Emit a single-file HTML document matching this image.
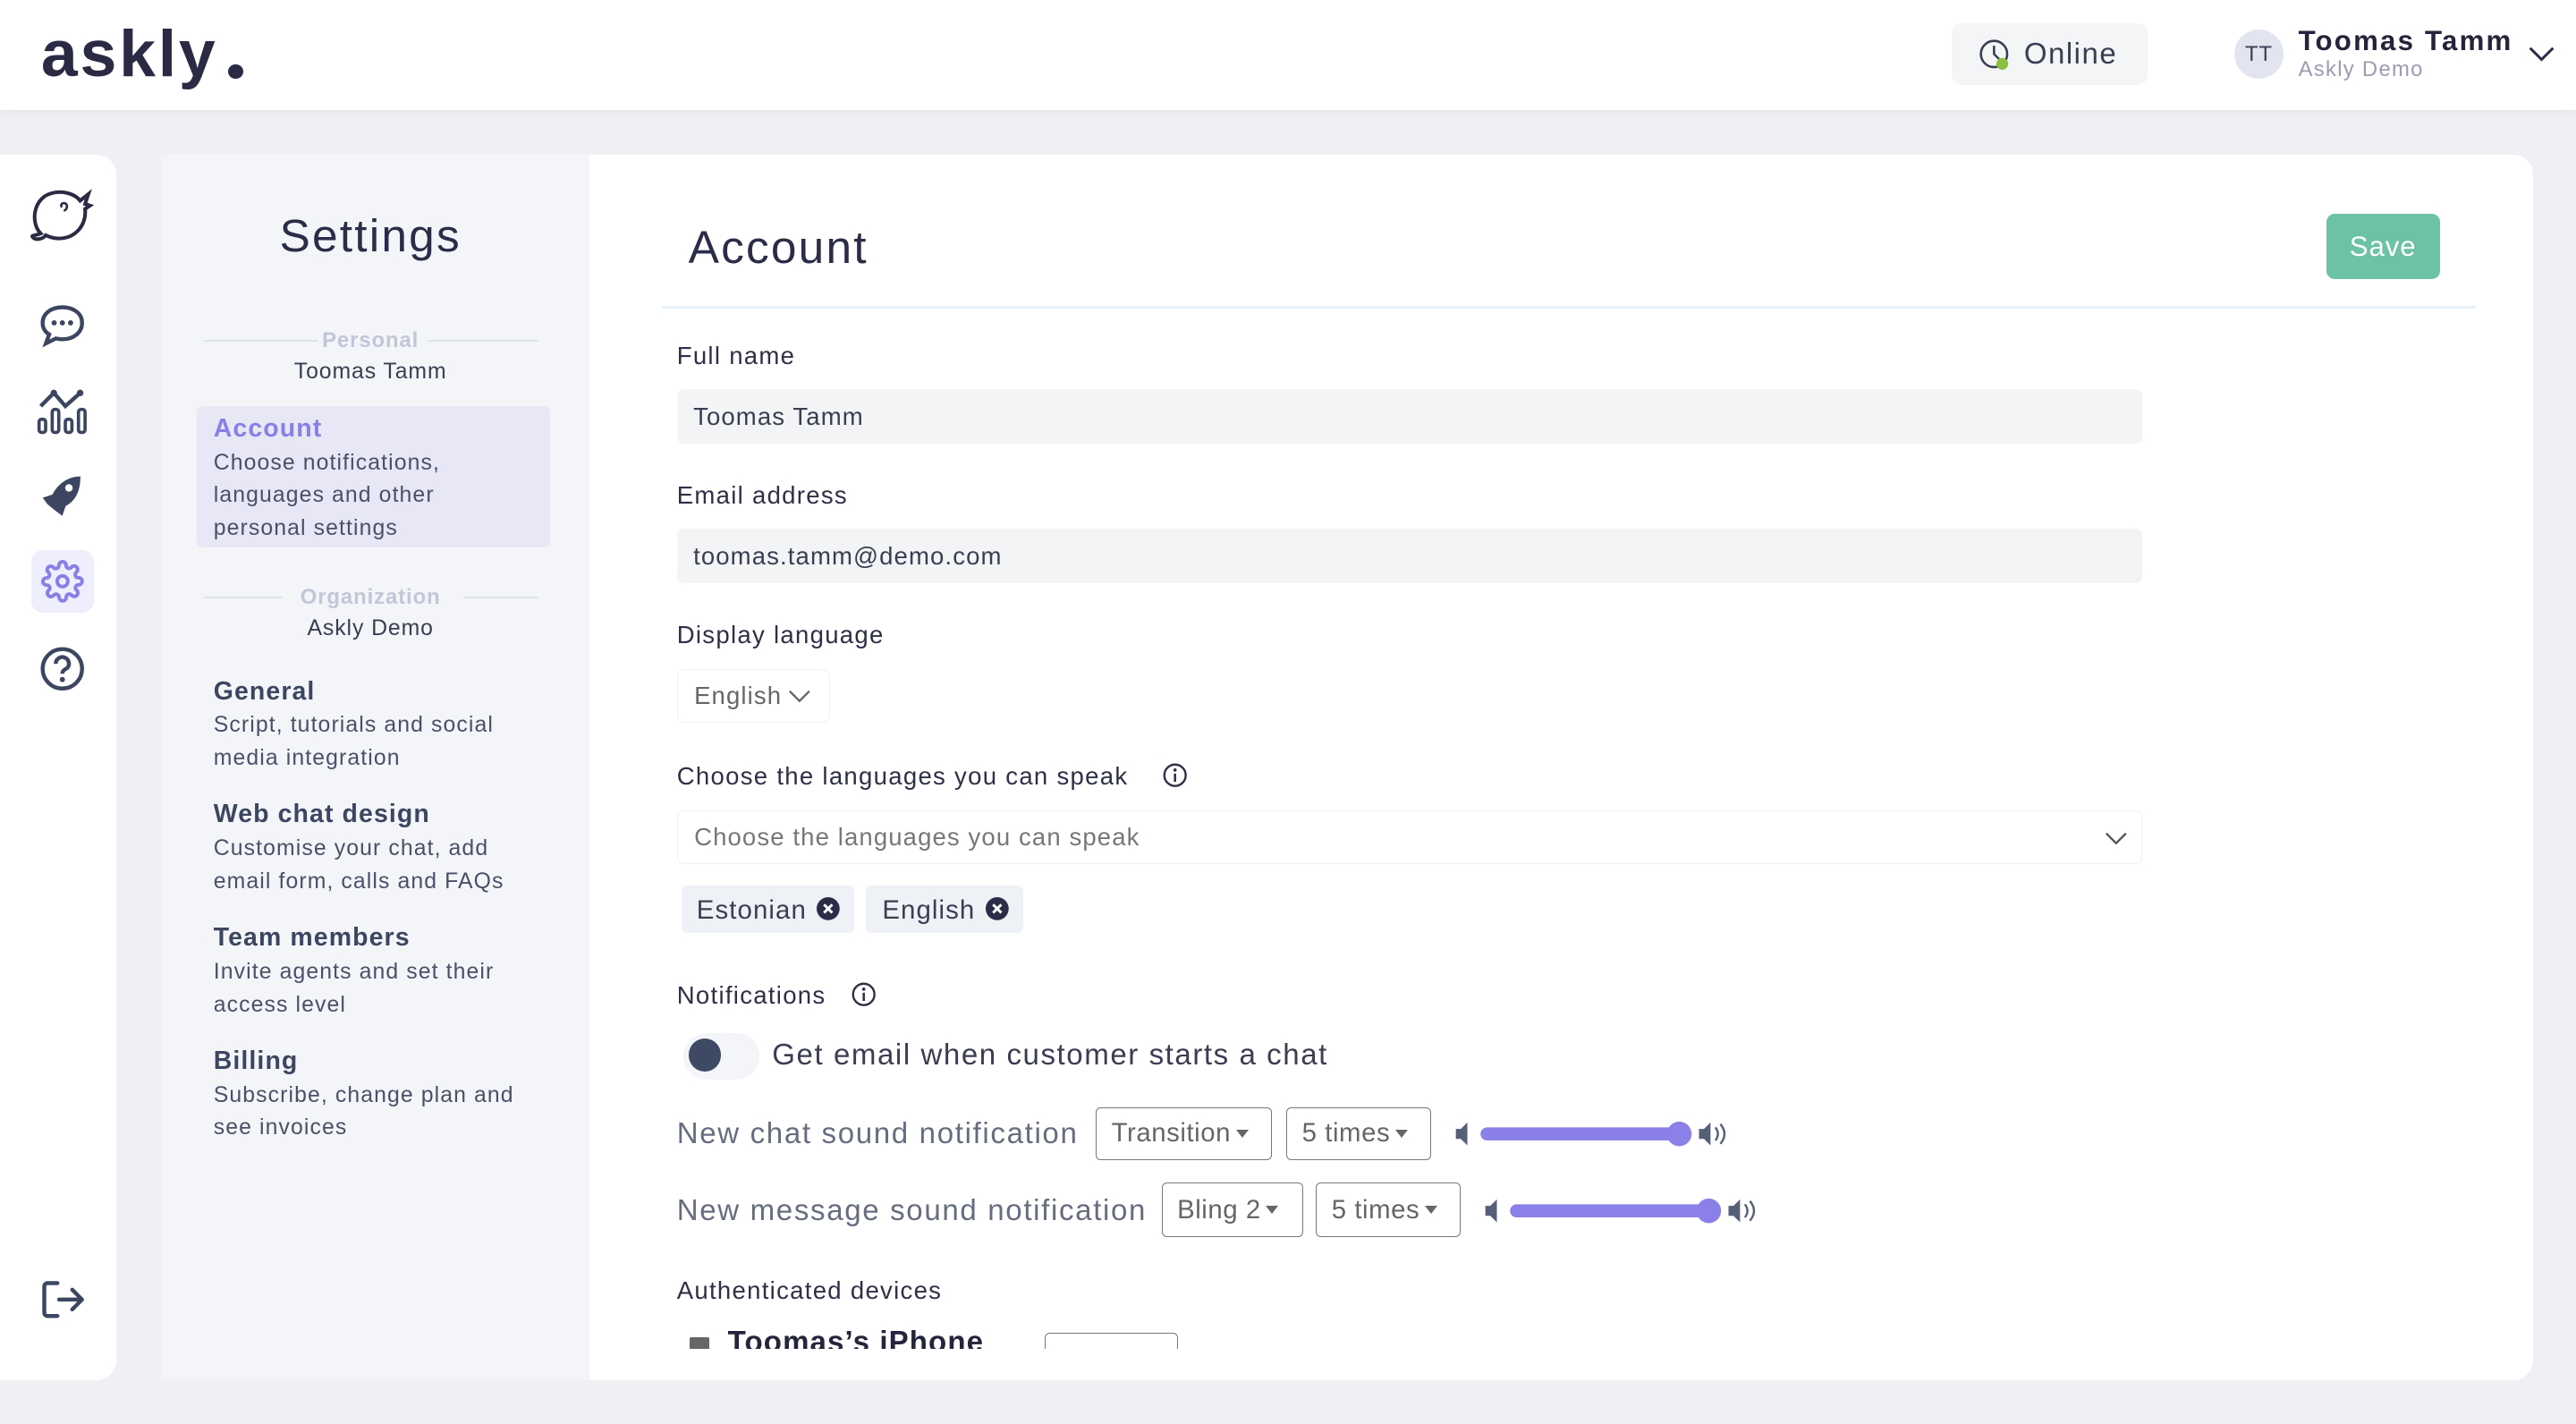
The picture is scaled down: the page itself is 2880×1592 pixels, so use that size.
<!DOCTYPE html>
<html><head><meta charset="utf-8"><style>
html,body{margin:0;padding:0;overflow:hidden;width:2880px;height:1592px;background:#eef0f3}
#w{zoom:1.83673;width:1568px;height:867px;position:relative;font-family:"Liberation Sans",sans-serif;color:#2b2d48;letter-spacing:0.5px}
.a{position:absolute;white-space:nowrap}
.lbl{font-size:15px;color:#2e3047;letter-spacing:0.7px}
.inp{position:absolute;background:#f3f4f6;border-radius:4px;font-size:15px;color:#3b3d52;box-sizing:border-box;padding-left:10px;display:flex;align-items:center;letter-spacing:0.6px}
.nh{font-size:15.5px;font-weight:bold;color:#3d4660;letter-spacing:0.6px}
.nd{font-size:13.5px;color:#4a5068;line-height:20px;letter-spacing:0.6px}
.sel{position:absolute;border:1px solid #777;border-radius:3px;box-sizing:border-box;font-size:16px;color:#666;display:flex;align-items:center;padding-left:9px;letter-spacing:0.3px}
.tri{display:inline-block;border-left:4px solid transparent;border-right:4px solid transparent;border-top:5px solid #666;margin-left:3px}
.row{font-size:18px;color:#666d80;letter-spacing:0.9px}
</style></head><body><div id="w">
<!-- header -->
<div class="a" style="left:0;top:0;width:1568px;height:67px;background:#fff;box-shadow:0 2px 6px rgba(0,0,0,.05)"></div>
<div class="a" style="left:25px;top:9px;font-size:40px;font-weight:bold;color:#2b2a45;letter-spacing:1.5px">askly</div>
<div class="a" style="left:139px;top:39px;width:9px;height:9px;border-radius:50%;background:#2b2a45"></div>
<div class="a" style="left:1188px;top:14px;width:119px;height:38px;background:#f3f5f7;border-radius:6px"></div>
<svg class="a" style="left:1204px;top:23px" width="22" height="22" viewBox="0 0 22 22"><circle cx="10" cy="10" r="8" fill="none" stroke="#3b3d52" stroke-width="1.4"/><path d="M10 5v5l3 3" fill="none" stroke="#3b3d52" stroke-width="1.4"/><circle cx="15" cy="16" r="3.6" fill="#8cbf3f"/></svg>
<div class="a" style="left:1232px;top:23px;font-size:18px;color:#3b3d52;letter-spacing:0.8px">Online</div>
<div class="a" style="left:1360px;top:18px;width:30px;height:30px;border-radius:50%;background:#e2e5ef;font-size:13px;color:#3b3d52;text-align:center;line-height:30px">TT</div>
<div class="a" style="left:1399px;top:15px;font-size:17px;font-weight:bold;color:#24253d;letter-spacing:1.2px">Toomas Tamm</div>
<div class="a" style="left:1399px;top:35px;font-size:13px;color:#9a9cb3;letter-spacing:0.7px">Askly Demo</div>
<svg class="a" style="left:1538px;top:27px" width="18" height="12"><path d="M2 2l7 7 7-7" fill="none" stroke="#2b2d48" stroke-width="1.6"/></svg>
<!-- rail -->
<div class="a" style="left:0;top:94px;width:71px;height:746px;background:#fff;border-radius:0 12px 12px 0"></div>
<svg class="a" style="left:16px;top:112px" width="44" height="40" viewBox="0 0 44 40"><path d="M9 30C3 24 4 10 14 6c8-3 16 0 19 4l5-4-2 6 3 1-3 2c1 10-6 18-16 18-3 0-6-1-8-2-2 3-7 3-8 1-1-1 3-1 5-2z" fill="none" stroke="#2b2a45" stroke-width="2.2"/><path d="M22 14c-2-2 2-4 3-1 0 2-1 3-2 3" fill="none" stroke="#2b2a45" stroke-width="1.4"/></svg>
<svg class="a" style="left:24px;top:184px" width="28" height="28" viewBox="0 0 28 28"><path d="M14 3C7 3 2 7 2 12.5c0 3 1.5 5.5 4 7L4 25l6-3c1.3.3 2.6.5 4 .5 7 0 12-4.3 12-10S21 3 14 3z" fill="none" stroke="#3d4660" stroke-width="2.4"/><circle cx="9" cy="12.5" r="1.6" fill="#3d4660"/><circle cx="14" cy="12.5" r="1.6" fill="#3d4660"/><circle cx="19" cy="12.5" r="1.6" fill="#3d4660"/></svg>
<svg class="a" style="left:22px;top:235px" width="34" height="30" viewBox="0 0 34 30"><path d="M3 12l8-8 7 8 9-8" fill="none" stroke="#3d4660" stroke-width="2.4"/><circle cx="11" cy="4" r="2" fill="#3d4660"/><circle cx="27" cy="4" r="2" fill="#3d4660"/><rect x="2" y="20" width="4" height="8" rx="1.5" fill="none" stroke="#3d4660" stroke-width="2"/><rect x="10" y="14" width="4" height="14" rx="1.5" fill="none" stroke="#3d4660" stroke-width="2"/><rect x="18" y="20" width="4" height="8" rx="1.5" fill="none" stroke="#3d4660" stroke-width="2"/><rect x="26" y="14" width="4" height="14" rx="1.5" fill="none" stroke="#3d4660" stroke-width="2"/></svg>
<svg class="a" style="left:24px;top:288px" width="28" height="28" viewBox="0 0 28 28"><path d="M25 2C17 2 11 7 8 13l-6 2 3 4 5 4 4 3 2-6c6-3 9-9 9-18z" fill="#3d4660"/><circle cx="18" cy="9" r="2.3" fill="#fff"/></svg>
<div class="a" style="left:19px;top:335px;width:38px;height:38px;background:#efeefc;border-radius:7px"></div>
<svg class="a" style="left:25px;top:341px" width="26" height="26" viewBox="0 0 24 24"><path d="M12 15a3 3 0 100-6 3 3 0 000 6z" fill="none" stroke="#8a7fe6" stroke-width="2"/><path d="M19.4 15a1.7 1.7 0 00.3 1.8l.1.1a2 2 0 11-2.8 2.8l-.1-.1a1.7 1.7 0 00-1.8-.3 1.7 1.7 0 00-1 1.5V21a2 2 0 11-4 0v-.1a1.7 1.7 0 00-1.1-1.5 1.7 1.7 0 00-1.8.3l-.1.1a2 2 0 11-2.8-2.8l.1-.1a1.7 1.7 0 00.3-1.8 1.7 1.7 0 00-1.5-1H3a2 2 0 110-4h.1a1.7 1.7 0 001.5-1.1 1.7 1.7 0 00-.3-1.8l-.1-.1a2 2 0 112.8-2.8l.1.1a1.7 1.7 0 001.8.3H9a1.7 1.7 0 001-1.5V3a2 2 0 114 0v.1a1.7 1.7 0 001 1.5 1.7 1.7 0 001.8-.3l.1-.1a2 2 0 112.8 2.8l-.1.1a1.7 1.7 0 00-.3 1.8V9a1.7 1.7 0 001.5 1H21a2 2 0 110 4h-.1a1.7 1.7 0 00-1.5 1z" fill="none" stroke="#8a7fe6" stroke-width="2"/></svg>
<svg class="a" style="left:24px;top:393px" width="28" height="28" viewBox="0 0 28 28"><circle cx="14" cy="14" r="12" fill="none" stroke="#3d4660" stroke-width="2.4"/><path d="M10 11a4 4 0 117 2.5c-1.5 1-3 1.5-3 3.5" fill="none" stroke="#3d4660" stroke-width="2.4"/><circle cx="14" cy="20.5" r="1.6" fill="#3d4660"/></svg>
<svg class="a" style="left:24px;top:778px" width="28" height="26" viewBox="0 0 28 26"><path d="M11 3H5a2 2 0 00-2 2v16a2 2 0 002 2h6M12 13h13M20 7l6 6-6 6" fill="none" stroke="#3d4660" stroke-width="2.4" stroke-linecap="round" stroke-linejoin="round"/></svg>
<!-- settings panel -->
<div class="a" style="left:98px;top:94px;width:261px;height:746px;background:#f3f5f8"></div>
<div class="a" style="left:98px;top:127px;width:255px;text-align:center;font-size:28px;color:#2b2d48;letter-spacing:1.2px">Settings</div>
<div class="a" style="left:124px;top:207px;width:70px;height:1px;background:#dfe2ea"></div>
<div class="a" style="left:260px;top:207px;width:68px;height:1px;background:#dfe2ea"></div>
<div class="a" style="left:98px;top:200px;width:255px;text-align:center;font-size:13px;font-weight:bold;color:#c3c6d8">Personal</div>
<div class="a" style="left:98px;top:219px;width:255px;text-align:center;font-size:13.5px;color:#3b3d52">Toomas Tamm</div>
<div class="a" style="left:120px;top:247px;width:215px;height:86px;background:#e7e7f6;border-radius:4px"></div>
<div class="a nh" style="left:130px;top:252px;color:#8a7fe6">Account</div>
<div class="a nd" style="left:130px;top:272px">Choose notifications,<br>languages and other<br>personal settings</div>
<div class="a" style="left:124px;top:363px;width:48px;height:1px;background:#dfe2ea"></div>
<div class="a" style="left:282px;top:363px;width:46px;height:1px;background:#dfe2ea"></div>
<div class="a" style="left:98px;top:356px;width:255px;text-align:center;font-size:13px;font-weight:bold;color:#c3c6d8">Organization</div>
<div class="a" style="left:98px;top:375px;width:255px;text-align:center;font-size:13.5px;color:#3b3d52">Askly Demo</div>
<div class="a nh" style="left:130px;top:412px">General</div>
<div class="a nd" style="left:130px;top:432px">Script, tutorials and social<br>media integration</div>
<div class="a nh" style="left:130px;top:487px">Web chat design</div>
<div class="a nd" style="left:130px;top:507px">Customise your chat, add<br>email form, calls and FAQs</div>
<div class="a nh" style="left:130px;top:562px">Team members</div>
<div class="a nd" style="left:130px;top:582px">Invite agents and set their<br>access level</div>
<div class="a nh" style="left:130px;top:637px">Billing</div>
<div class="a nd" style="left:130px;top:657px">Subscribe, change plan and<br>see invoices</div>
<!-- main -->
<div class="a" style="left:359px;top:94px;width:1183px;height:746px;background:#fff;border-radius:0 12px 12px 0;overflow:hidden"></div>
<div class="a" style="left:419px;top:134px;font-size:28px;color:#2b2d48;letter-spacing:1.2px">Account</div>
<div class="a" style="left:1416px;top:130px;width:69px;height:40px;background:#6cc3a3;border-radius:5px;color:#fff;font-size:17px;text-align:center;line-height:40px">Save</div>
<div class="a" style="left:403px;top:186px;width:1104px;height:2px;background:#e9f1f8"></div>
<div class="a lbl" style="left:412px;top:208px">Full name</div>
<div class="inp" style="left:412px;top:237px;width:892px;height:33px">Toomas Tamm</div>
<div class="a lbl" style="left:412px;top:293px">Email address</div>
<div class="inp" style="left:412px;top:322px;width:892px;height:33px">toomas.tamm@demo.com</div>
<div class="a lbl" style="left:412px;top:378px">Display language</div>
<div class="inp" style="left:412px;top:407px;width:93px;height:33px;background:#fff;border:1px solid #f0f1f4;color:#666">English <svg width="14" height="10" style="margin-left:4px"><path d="M1 2l6 6 6-6" fill="none" stroke="#666" stroke-width="1.3"/></svg></div>
<div class="a lbl" style="left:412px;top:464px">Choose the languages you can speak</div>
<svg class="a" style="left:707px;top:464px" width="16" height="16"><circle cx="8" cy="8" r="6.5" fill="none" stroke="#2e3047" stroke-width="1.3"/><rect x="7.3" y="7" width="1.4" height="5" fill="#2e3047"/><circle cx="8" cy="4.8" r="1" fill="#2e3047"/></svg>
<div class="inp" style="left:412px;top:493px;width:892px;height:33px;background:#fff;border:1px solid #eef0f3;color:#777">Choose the languages you can speak</div>
<svg class="a" style="left:1281px;top:505px" width="14" height="10"><path d="M1 2l6 6 6-6" fill="none" stroke="#555" stroke-width="1.3"/></svg>
<div class="a" style="left:415px;top:539px;width:105px;height:29px;background:#eef2f7;border-radius:3px"></div>
<div class="a" style="left:424px;top:545px;font-size:16px;color:#3b3d52;letter-spacing:0.6px">Estonian</div>
<svg class="a" style="left:497px;top:546px" width="14" height="14"><circle cx="7" cy="7" r="7" fill="#2b2d48"/><path d="M4.5 4.5l5 5M9.5 4.5l-5 5" stroke="#fff" stroke-width="1.6"/></svg>
<div class="a" style="left:527px;top:539px;width:96px;height:29px;background:#eef2f7;border-radius:3px"></div>
<div class="a" style="left:537px;top:545px;font-size:16px;color:#3b3d52;letter-spacing:0.6px">English</div>
<svg class="a" style="left:600px;top:546px" width="14" height="14"><circle cx="7" cy="7" r="7" fill="#2b2d48"/><path d="M4.5 4.5l5 5M9.5 4.5l-5 5" stroke="#fff" stroke-width="1.6"/></svg>
<div class="a lbl" style="left:412px;top:597px">Notifications</div>
<svg class="a" style="left:518px;top:597px" width="16" height="16"><circle cx="8" cy="8" r="6.5" fill="none" stroke="#2e3047" stroke-width="1.3"/><rect x="7.3" y="7" width="1.4" height="5" fill="#2e3047"/><circle cx="8" cy="4.8" r="1" fill="#2e3047"/></svg>
<div class="a" style="left:416px;top:629px;width:46px;height:28px;background:#f3f5f8;border-radius:14px"></div>
<div class="a" style="left:419px;top:632px;width:20px;height:20px;background:#3e4a63;border-radius:50%"></div>
<div class="a" style="left:470px;top:632px;font-size:18px;color:#3b3d52;letter-spacing:0.85px">Get email when customer starts a chat</div>
<div class="a row" style="left:412px;top:680px">New chat sound notification</div>
<div class="sel" style="left:667px;top:674px;width:107px;height:32px">Transition<span class="tri"></span></div>
<div class="sel" style="left:783px;top:674px;width:88px;height:32px">5 times<span class="tri"></span></div>
<svg class="a" style="left:884px;top:682px" width="170" height="16"><path d="M2 5h3l4-4v14l-4-4H2z" fill="#555f78"/><rect x="17" y="4" width="122" height="8" rx="4" fill="#8b80e8"/><circle cx="138" cy="8" r="7.5" fill="#8b80e8"/><path d="M150 5h3l4-4v14l-4-4h-3z" fill="#555f78"/><path d="M160 4q3 4 0 8M163 2q5 6 0 12" fill="none" stroke="#555f78" stroke-width="1.3"/></svg>
<div class="a row" style="left:412px;top:727px">New message sound notification</div>
<div class="sel" style="left:707px;top:720px;width:86px;height:33px">Bling 2<span class="tri"></span></div>
<div class="sel" style="left:801px;top:720px;width:88px;height:33px">5 times<span class="tri"></span></div>
<svg class="a" style="left:902px;top:729px" width="170" height="16"><path d="M2 5h3l4-4v14l-4-4H2z" fill="#555f78"/><rect x="17" y="4" width="122" height="8" rx="4" fill="#8b80e8"/><circle cx="138" cy="8" r="7.5" fill="#8b80e8"/><path d="M150 5h3l4-4v14l-4-4h-3z" fill="#555f78"/><path d="M160 4q3 4 0 8M163 2q5 6 0 12" fill="none" stroke="#555f78" stroke-width="1.3"/></svg>
<div class="a lbl" style="left:412px;top:777px">Authenticated devices</div>
<div class="a" style="left:412px;top:800px;width:320px;height:21px;overflow:hidden">
 <div class="a" style="left:8px;top:14px;width:12px;height:12px;background:#666;border-radius:1px"></div>
 <div class="a" style="left:31px;top:7px;font-size:18px;font-weight:bold;color:#24253d;letter-spacing:0.6px">Toomas’s iPhone</div>
 <div class="a" style="left:224px;top:11px;width:80px;height:20px;border:1px solid #777;border-radius:3px"></div>
</div>
</div></body></html>
